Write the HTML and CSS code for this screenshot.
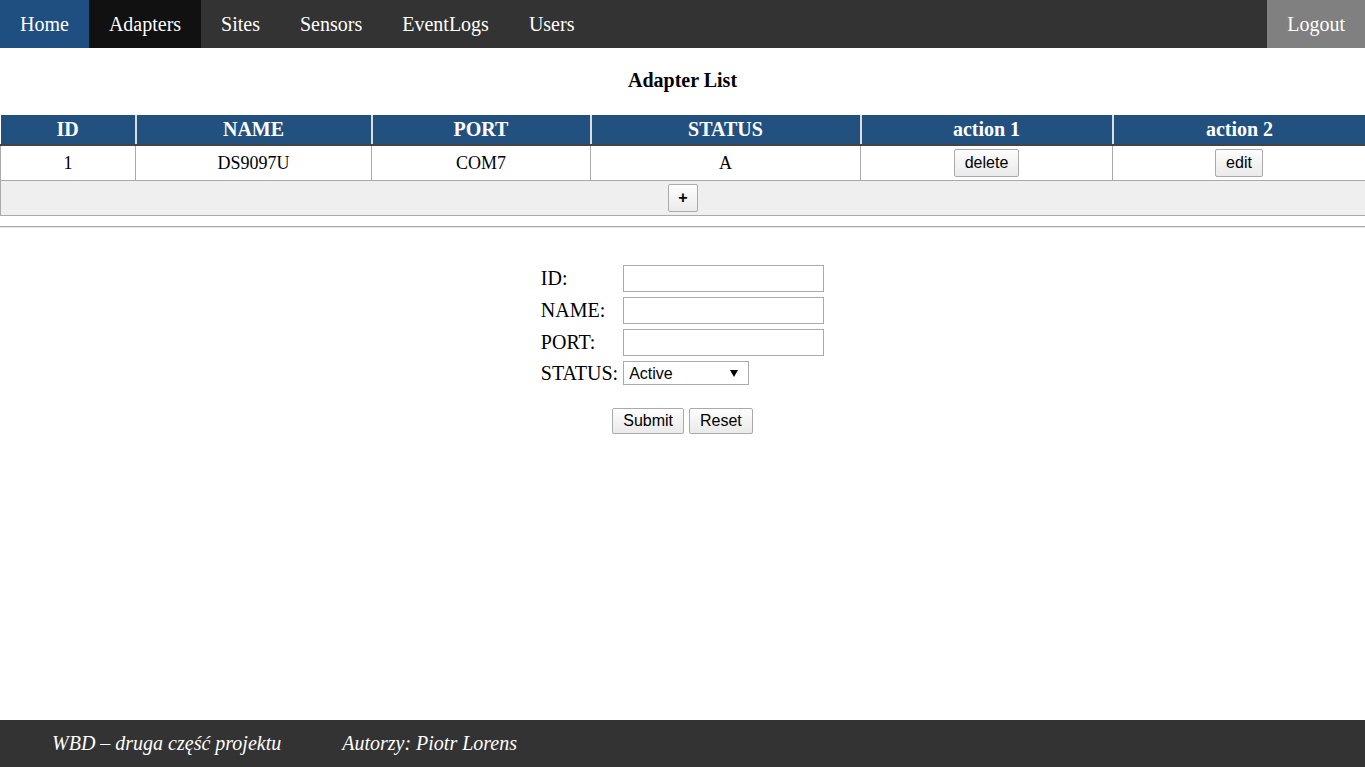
FILE: index.html
```html
<!DOCTYPE html>
<html lang="pl">
<head>
<meta charset="utf-8">
<title>Adapter List</title>
<link rel="stylesheet" href="styles.css">
</head>
<body>
<nav class="topnav">
  <a class="nav-link nav-home" href="#">Home</a>
  <a class="nav-link nav-active" href="#">Adapters</a>
  <a class="nav-link" href="#">Sites</a>
  <a class="nav-link" href="#">Sensors</a>
  <a class="nav-link" href="#">EventLogs</a>
  <a class="nav-link" href="#">Users</a>
  <a class="nav-link nav-logout" href="#">Logout</a>
</nav>
<main class="content">
  <h2 class="page-title">Adapter List</h2>
  <table class="data-table">
    <colgroup>
      <col class="c-id"><col class="c-name"><col class="c-port"><col class="c-status"><col class="c-a1"><col class="c-a2">
    </colgroup>
    <thead>
      <tr>
        <th>ID</th><th>NAME</th><th>PORT</th><th>STATUS</th><th>action 1</th><th class="last">action 2</th>
      </tr>
    </thead>
    <tbody>
      <tr>
        <td>1</td><td>DS9097U</td><td>COM7</td><td>A</td>
        <td><button class="btn" type="button">delete</button></td>
        <td><button class="btn" type="button">edit</button></td>
      </tr>
      <tr class="add-row">
        <td colspan="6"><button class="btn btn-plus" type="button">+</button></td>
      </tr>
    </tbody>
  </table>
  <hr class="divider">
  <form class="adapter-form">
    <div class="form-grid">
      <label class="form-label" for="f-id">ID:</label>
      <input class="form-input" id="f-id" type="text">
      <label class="form-label" for="f-name">NAME:</label>
      <input class="form-input" id="f-name" type="text">
      <label class="form-label" for="f-port">PORT:</label>
      <input class="form-input" id="f-port" type="text">
      <label class="form-label" for="f-status">STATUS:</label>
      <span class="select-wrap"><select class="form-select" id="f-status"><option>Active</option><option>Inactive</option></select></span>
    </div>
    <div class="form-actions">
      <button class="btn" type="submit">Submit</button>
      <button class="btn" type="reset">Reset</button>
    </div>
  </form>
</main>
<footer class="footer">
  <span class="footer-item">WBD – druga część projektu</span>
  <span class="footer-item">Autorzy: Piotr Lorens</span>
</footer>
</body>
</html>
```
FILE: styles.css
```css
html, body {
  margin: 0;
  padding: 0;
}
body {
  font-family: "Liberation Serif", "Times New Roman", serif;
  color: #000;
  background: #fff;
  min-height: 100vh;
  display: flex;
  flex-direction: column;
}
.topnav {
  display: flex;
  background: #333;
  height: 48px;
}
.nav-link {
  display: block;
  color: #fff;
  text-decoration: none;
  font-size: 20px;
  line-height: 49px;
  padding: 0 20px;
}
.nav-home { background: #1f4f80; }
.nav-active { background: #111; }
.nav-logout {
  margin-left: auto;
  background: #808080;
}
.content {
  flex: 1;
}
.page-title {
  margin: 0;
  padding: 21px 0 0;
  height: 46px;
  font-size: 20px;
  line-height: 23px;
  text-align: center;
  font-weight: bold;
}
.data-table {
  width: 100%;
  border-collapse: collapse;
  table-layout: fixed;
  font-size: 18px;
}
.c-id { width: 135px; }
.c-name { width: 236px; }
.c-port { width: 219px; }
.c-status { width: 270px; }
.c-a1 { width: 252px; }
.c-a2 { width: 253px; }
.data-table th {
  background: #22517f;
  color: #fff;
  font-size: 20px;
  font-weight: bold;
  height: 28px;
  line-height: 29px;
  padding: 0;
  border-right: 2px solid #ddd;
  border-bottom: 2px solid #444;
  text-align: center;
}
.data-table th.last { border-right: 0; }
.data-table td {
  height: 34px;
  padding: 0;
  text-align: center;
  border: 1px solid #aaa;
  vertical-align: middle;
}
.add-row td {
  background: #efefef;
}
.btn {
  font-family: "Liberation Sans", Arial, sans-serif;
  font-size: 16px;
  line-height: 20px;
  padding: 3px 10px;
  color: #000;
  background: linear-gradient(#fdfdfd, #eaeaea);
  border: 1px solid #aaa;
  border-radius: 2px;
  cursor: pointer;
}
.btn-plus {
  font-weight: bold;
  width: 30px;
  height: 28px;
  line-height: 18px;
  padding: 0;
}
.divider {
  margin: 10px 0 0;
  border: 0;
  border-top: 1px solid #aaa;
  border-bottom: 1px solid #e5e5e5;
}
.adapter-form {
  display: flex;
  flex-direction: column;
  align-items: center;
  padding-top: 37px;
}
.form-grid {
  display: grid;
  grid-template-columns: auto auto;
  column-gap: 5px;
  row-gap: 5px;
  align-items: center;
}
.form-label {
  font-size: 20px;
  line-height: 23px;
}
.form-input {
  box-sizing: border-box;
  width: 201px;
  height: 27px;
  border: 1px solid #aaa;
  font-family: "Liberation Sans", Arial, sans-serif;
  font-size: 16px;
  padding: 2px 4px;
  margin: 0;
}
.select-wrap {
  position: relative;
  display: inline-block;
  width: 126px;
  height: 24px;
}
.form-select {
  -webkit-appearance: none;
  appearance: none;
  box-sizing: border-box;
  width: 126px;
  height: 24px;
  border: 1px solid #aaa;
  background: #fff;
  font-family: "Liberation Sans", Arial, sans-serif;
  font-size: 16px;
  padding: 0 5px;
  margin: 0;
  color: #000;
  border-radius: 0;
}
.select-wrap::after {
  content: "";
  position: absolute;
  right: 11px;
  top: 9px;
  border-left: 4px solid transparent;
  border-right: 4px solid transparent;
  border-top: 7px solid #000;
  pointer-events: none;
}
.form-actions {
  display: flex;
  gap: 5px;
  margin-top: 23px;
}
.form-actions .btn {
  padding: 2px 10px;
}
.footer {
  display: flex;
  gap: 61px;
  align-items: center;
  height: 47px;
  padding-left: 52px;
  background: #333;
  color: #fff;
  font-style: italic;
  font-size: 20px;
}
```
